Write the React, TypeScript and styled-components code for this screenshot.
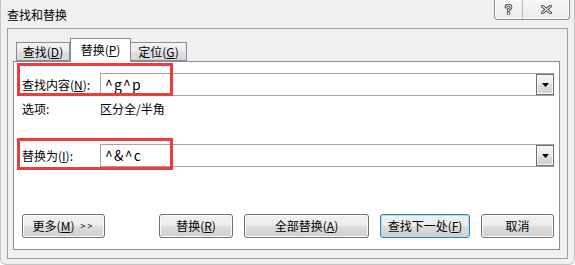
import { createGlobalStyle } from 'styled-components';
import styled from 'styled-components';

const GlobalStyle = createGlobalStyle`
  html, body {
    margin: 0;
    padding: 0;
    background: #ffffff;
  }
  body {
    font-family: "Noto Sans CJK SC", "Microsoft YaHei", sans-serif;
    font-size: 12px;
    color: #000000;
  }
  * {
    box-sizing: border-box;
  }
`;

const Window = styled.div`
  width: 575px;
  height: 265px;
  background: #f0f0f0;
  border: 1px solid #c4c4c4;
  border-top: none;
  border-radius: 0 0 6px 6px;
  display: flex;
  flex-direction: column;
`;

const TitleBar = styled.div`
  height: 28px;
  flex-shrink: 0;
  display: flex;
  align-items: flex-start;
  justify-content: space-between;
  padding-left: 6px;
`;

const Title = styled.div`
  line-height: 29px;
  font-size: 12px;
  color: #000;
`;

const CaptionGroup = styled.div`
  display: flex;
  height: 20px;
  margin-right: 4px;
  border: 1px solid #8f8f8f;
  border-top: none;
  border-radius: 0 0 4px 4px;
  background: linear-gradient(#f7f7f7, #ececec);
  box-shadow: inset 0 0 0 1px #fbfbfb;
`;

const CaptionButton = styled.div<{ $w: number; $divider?: boolean }>`
  width: ${({ $w }) => $w}px;
  display: flex;
  align-items: center;
  justify-content: center;
  border-right: ${({ $divider }) => ($divider ? '1px solid #b9b9b9' : 'none')};
`;

const Frame = styled.div`
  flex: 1;
  margin: 0 6px 5px 6px;
  border: 1px solid #a0a0a0;
  padding: 9px 7px 8px 5px;
  display: flex;
  flex-direction: column;
`;

const TabStrip = styled.div`
  height: 23px;
  flex-shrink: 0;
  display: flex;
  align-items: flex-start;
  padding-left: 3px;
  position: relative;
  z-index: 1;
`;

const Tab = styled.div<{ $active?: boolean; $w: number }>`
  width: ${({ $w }) => $w}px;
  height: ${({ $active }) => ($active ? 24 : 19)}px;
  margin-top: ${({ $active }) => ($active ? 0 : 4)}px;
  border: 1px solid #898c95;
  border-bottom: ${({ $active }) => ($active ? 'none' : '1px solid #898c95')};
  border-left: ${({ $active }) => ($active ? '1px solid #898c95' : 'none')};
  background: ${({ $active }) =>
    $active ? '#ffffff' : 'linear-gradient(#f3f3f3 0%, #ebebeb 50%, #dedede 50%, #d9d9d9 100%)'};
  display: flex;
  align-items: center;
  justify-content: center;
  padding-bottom: ${({ $active }) => ($active ? 2 : 0)}px;
  font-size: 12px;

  &:first-child {
    border-left: 1px solid #898c95;
  }
`;

const Key = styled.span`
  text-decoration: underline;
  text-underline-offset: 1px;
`;

const Panel = styled.div`
  flex: 1;
  border: 1px solid #898c95;
  background: #ffffff;
  display: flex;
  flex-direction: column;
  padding: 0 5px 11px 8px;
`;

const FieldRow = styled.div<{ $top: number }>`
  position: relative;
  display: flex;
  align-items: center;
  height: 23px;
  margin-top: ${({ $top }) => $top}px;
`;

const FieldLabel = styled.div`
  width: 78px;
  flex-shrink: 0;
  font-size: 12px;
`;

const InputBox = styled.div`
  flex: 1;
  height: 23px;
  border: 1px solid #a3a3a3;
  background: #ffffff;
  display: flex;
  align-items: center;
  padding-left: 4px;
`;

const InputText = styled.div`
  flex: 1;
  font-size: 14px;
  letter-spacing: 1.2px;
  line-height: 21px;
  padding-bottom: 1px;
`;

const DropButton = styled.div`
  width: 18px;
  height: 21px;
  border: 1px solid #6f6f6f;
  background: linear-gradient(#f4f4f4 0%, #ebebeb 50%, #dcdcdc 50%, #d2d2d2 100%);
  box-shadow: inset 0 0 0 1px #fafafa;
  display: flex;
  align-items: center;
  justify-content: center;
  margin-right: -1px;
`;

const Highlight = styled.div<{ $top: number; $bottom: number }>`
  position: absolute;
  left: -5px;
  width: 156px;
  top: ${({ $top }) => -$top}px;
  bottom: ${({ $bottom }) => -$bottom}px;
  border: 3px solid #f03a3c;
  pointer-events: none;
`;

const OptionRow = styled.div`
  display: flex;
  margin-top: 5px;
  line-height: 16px;
  font-size: 12px;
`;

const OptionLabel = styled.div`
  width: 78px;
`;

const ButtonRow = styled.div`
  margin-top: auto;
  display: flex;
  align-items: center;
`;

const ActionGroup = styled.div`
  margin-left: auto;
  display: flex;
  gap: 11px;
`;

const Button = styled.div<{ $w: number; $default?: boolean }>`
  width: ${({ $w }) => $w}px;
  height: 24px;
  border: 1px solid ${({ $default }) => ($default ? '#3c7fb1' : '#707070')};
  border-radius: 3px;
  background: linear-gradient(#f2f2f2 0%, #ebebeb 50%, #dddddd 50%, #cfcfcf 100%);
  box-shadow: inset 0 0 0 1px ${({ $default }) => ($default ? '#a6e0f8' : '#fbfbfb')};
  display: flex;
  align-items: center;
  justify-content: center;
  font-size: 12px;
  padding-bottom: 1px;
`;

const Chevrons = styled.span`
  font-size: 9px;
  letter-spacing: 2px;
  margin-left: 6px;
`;

const HelpIcon = () => (
  <svg width="9" height="11" viewBox="0 0 9 11">
    <path d="M2 3.2 Q2 1.2 4.5 1.2 Q7 1.2 7 3.2 Q7 4.6 4.5 5.6 V7" fill="none" stroke="#4a4a4a" strokeWidth="2.8" strokeLinecap="round" />
    <path d="M2 3.2 Q2 1.2 4.5 1.2 Q7 1.2 7 3.2 Q7 4.6 4.5 5.6 V7" fill="none" stroke="#ffffff" strokeWidth="1" strokeLinecap="round" />
    <circle cx="4.5" cy="9.3" r="1.4" fill="#ffffff" stroke="#4a4a4a" strokeWidth="0.9" />
  </svg>
);

const CloseIcon = () => (
  <svg width="11" height="9" viewBox="0 0 11 9">
    <path d="M1.5 1.2 L9.5 7.8 M9.5 1.2 L1.5 7.8" stroke="#4a4a4a" strokeWidth="3" strokeLinecap="square" />
    <path d="M1.5 1.2 L9.5 7.8 M9.5 1.2 L1.5 7.8" stroke="#ffffff" strokeWidth="1.1" strokeLinecap="square" />
  </svg>
);

const Arrow = () => (
  <svg width="7" height="4" viewBox="0 0 7 4">
    <polygon points="0,0 7,0 3.5,4" fill="#000" />
  </svg>
);

export default function App() {
  return (
    <>
      <GlobalStyle />
      <Window>
        <TitleBar>
          <Title>查找和替换</Title>
          <CaptionGroup>
            <CaptionButton $w={28} $divider>
              <HelpIcon />
            </CaptionButton>
            <CaptionButton $w={46}>
              <CloseIcon />
            </CaptionButton>
          </CaptionGroup>
        </TitleBar>

        <Frame>
          <TabStrip>
            <Tab $w={54}>
              查找(<Key>D</Key>)
            </Tab>
            <Tab $w={61} $active>
              替换(<Key>P</Key>)
            </Tab>
            <Tab $w={56}>
              定位(<Key>G</Key>)
            </Tab>
          </TabStrip>

          <Panel>
            <FieldRow $top={11}>
              <FieldLabel>
                查找内容(<Key>N</Key>):
              </FieldLabel>
              <InputBox>
                <InputText>^g^p</InputText>
                <DropButton>
                  <Arrow />
                </DropButton>
              </InputBox>
              <Highlight $top={10} $bottom={0} />
            </FieldRow>

            <OptionRow>
              <OptionLabel>选项:</OptionLabel>
              <div>区分全/半角</div>
            </OptionRow>

            <FieldRow $top={27}>
              <FieldLabel>
                替换为(<Key>I</Key>):
              </FieldLabel>
              <InputBox>
                <InputText>^&amp;^c</InputText>
                <DropButton>
                  <Arrow />
                </DropButton>
              </InputBox>
              <Highlight $top={6} $bottom={3} />
            </FieldRow>

            <ButtonRow>
              <Button $w={83}>
                更多(<Key>M</Key>)<Chevrons>&gt;&gt;</Chevrons>
              </Button>
              <ActionGroup>
                <Button $w={74}>
                  替换(<Key>R</Key>)
                </Button>
                <Button $w={125}>
                  全部替换(<Key>A</Key>)
                </Button>
                <Button $w={90} $default>
                  查找下一处(<Key>F</Key>)
                </Button>
                <Button $w={73}>取消</Button>
              </ActionGroup>
            </ButtonRow>
          </Panel>
        </Frame>
      </Window>
    </>
  );
}
